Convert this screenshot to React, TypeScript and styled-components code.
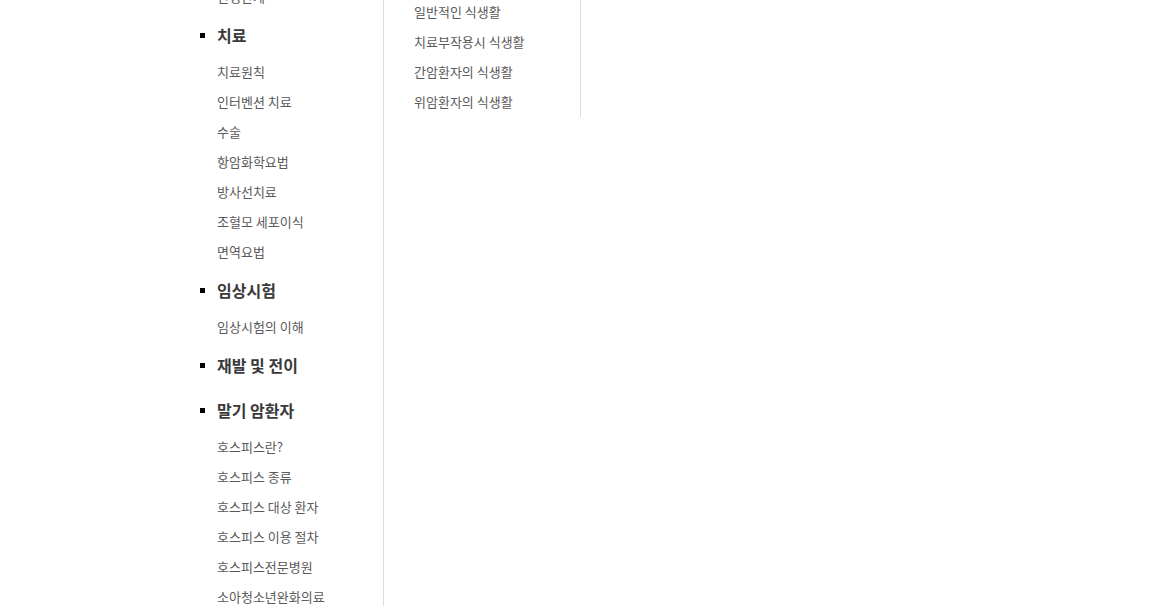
import React from 'react';
import styled, { createGlobalStyle } from 'styled-components';

const GlobalStyle = createGlobalStyle`
    html, body {
        margin: 0;
        padding: 0;
        background: #fff;
        overflow: hidden;
    }
    body {
        font-family: 'Noto Sans CJK KR', 'Noto Sans', sans-serif;
        color: #555;
    }
    ul {
        margin: 0;
        padding: 0;
        list-style: none;
    }
`;

interface Section {
    title?: string;
    items: string[];
}

const sections: Section[] = [
    { items: ['진행단계'] },
    {
        title: '치료',
        items: ['치료원칙', '인터벤션 치료', '수술', '항암화학요법', '방사선치료', '조혈모 세포이식', '면역요법'],
    },
    { title: '임상시험', items: ['임상시험의 이해'] },
    { title: '재발 및 전이', items: [] },
    {
        title: '말기 암환자',
        items: ['호스피스란?', '호스피스 종류', '호스피스 대상 환자', '호스피스 이용 절차', '호스피스전문병원', '소아청소년완화의료'],
    },
];

const dietItems = ['일반적인 식생활', '치료부작용시 식생활', '간암환자의 식생활', '위암환자의 식생활'];

export default function App() {
    return (
        <>
            <GlobalStyle />
            <Container>
                <LeftCol>
                    {sections.map((section, i) => (
                        <SectionBlock key={i} isFirst={!section.title}>
                            {section.title && <Heading>{section.title}</Heading>}
                            <SubList>
                                {section.items.map((item) => (
                                    <SubItem key={item}>{item}</SubItem>
                                ))}
                            </SubList>
                        </SectionBlock>
                    ))}
                </LeftCol>
                <MidCol>
                    <ul>
                        {dietItems.map((item) => (
                            <SubItem key={item}>{item}</SubItem>
                        ))}
                    </ul>
                </MidCol>
            </Container>
        </>
    );
}

const Container = styled.div`
    display: flex;
    align-items: flex-start;
    padding-left: 200px;
    margin-top: -25px;
    height: 660px;
`;

const LeftCol = styled.div`
    box-sizing: border-box;
    width: 184px;
    align-self: stretch;
    border-right: 1px solid #dddddd;
`;

const SectionBlock = styled.div<{ isFirst: boolean }>`
    margin-top: ${({ isFirst }) => (isFirst ? '0' : '8px')};
`;

const Heading = styled.h3`
    display: flex;
    align-items: center;
    gap: 12px;
    height: 30px;
    margin: 0;
    font-size: 16px;
    font-weight: 700;
    color: #3a3a3a;

    &::before {
        content: '';
        width: 5px;
        height: 5px;
        background: #000;
        flex-shrink: 0;
    }
`;

const SubList = styled.ul`
    padding-top: 7px !important;
    padding-left: 17px !important;
`;

const SubItem = styled.li`
    height: 30px;
    line-height: 30px;
    font-size: 13px;
    color: #5a5a5a;
    white-space: nowrap;
`;

const MidCol = styled.div`
    box-sizing: border-box;
    width: 197px;
    padding: 22px 0 0 30px;
    border-right: 1px solid #dddddd;
`;
